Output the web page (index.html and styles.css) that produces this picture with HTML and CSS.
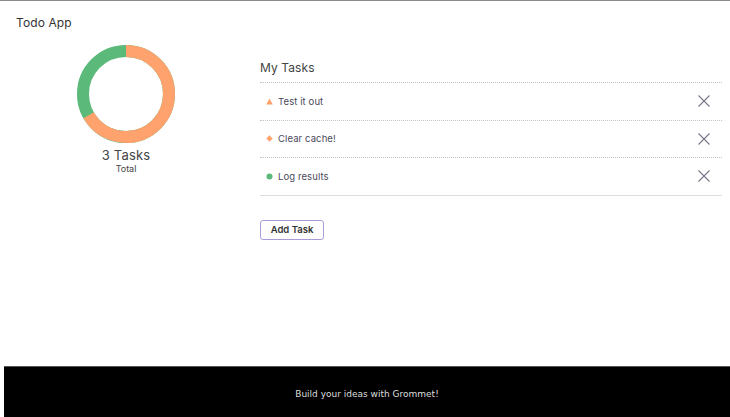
FILE: index.html
```html
<!DOCTYPE html>
<html>
<head>
<meta charset="utf-8">
<link rel="stylesheet" href="styles.css">
</head>
<body>
<div class="page">
  <main class="main">
    <h1 class="title">Todo App</h1>
    <div class="content">
      <section class="summary">
        <svg class="donut" width="98" height="98" viewBox="0 0 98 98">
          <circle cx="49" cy="49" r="43" fill="none" stroke="#5bb97a" stroke-width="12"/>
          <circle cx="49" cy="49" r="43" fill="none" stroke="#ffa26e" stroke-width="12"
            stroke-dasharray="180.1 90.1" transform="rotate(-90 49 49)"/>
        </svg>
        <div class="count">3 Tasks</div>
        <div class="count-label">Total</div>
      </section>
      <section class="tasks">
        <h2 class="tasks-title">My Tasks</h2>
        <ul class="list">
          <li class="item">
            <span class="marker"><svg width="7" height="7" viewBox="0 0 7 7"><polygon points="3.5,0.5 6.8,6.5 0.2,6.5" fill="#ffa26e"/></svg></span>
            <span class="label">Test it out</span>
            <svg class="close" width="12" height="12" viewBox="0 0 12 12"><path d="M0.5 0.5 L11.5 11.5 M11.5 0.5 L0.5 11.5" stroke="#77778a" stroke-width="1.1" fill="none"/></svg>
          </li>
          <li class="item">
            <span class="marker"><svg width="7" height="7" viewBox="0 0 7 7"><polygon points="3.5,0.3 6.7,3.5 3.5,6.7 0.3,3.5" fill="#ffa26e"/></svg></span>
            <span class="label">Clear cache!</span>
            <svg class="close" width="12" height="12" viewBox="0 0 12 12"><path d="M0.5 0.5 L11.5 11.5 M11.5 0.5 L0.5 11.5" stroke="#77778a" stroke-width="1.1" fill="none"/></svg>
          </li>
          <li class="item last">
            <span class="marker"><svg width="7" height="7" viewBox="0 0 7 7"><circle cx="3.5" cy="3.5" r="3" fill="#5bb97a"/></svg></span>
            <span class="label">Log results</span>
            <svg class="close" width="12" height="12" viewBox="0 0 12 12"><path d="M0.5 0.5 L11.5 11.5 M11.5 0.5 L0.5 11.5" stroke="#77778a" stroke-width="1.1" fill="none"/></svg>
          </li>
        </ul>
        <button class="add">Add Task</button>
      </section>
    </div>
  </main>
  <footer class="footer">Build your ideas with Grommet!</footer>
</div>
</body>
</html>
```

FILE: styles.css
```css
* { box-sizing: border-box; }
html, body { margin: 0; padding: 0; }
body {
  font-family: "Inter", "Open Sans", sans-serif;
  color: #444;
  background: #fff;
  border-top: 1px solid #8a8a8a;
  width: 730px;
  height: 417px;
  overflow: hidden;
}
.page {
  display: flex;
  flex-direction: column;
  height: 416px;
}
.main {
  flex: 1;
  padding: 14px 8px 0 16px;
}
.title {
  margin: 0;
  font-size: 12px;
  font-weight: 400;
  line-height: 16px;
  color: #333;
  letter-spacing: 0.1px;
}
.content {
  display: flex;
  gap: 24px;
  margin-top: 12px;
}
.summary {
  width: 220px;
  display: flex;
  flex-direction: column;
  align-items: center;
  padding-top: 2px;
}
.donut { display: block; }
.count {
  margin-top: 4px;
  font-size: 13px;
  line-height: 16px;
  color: #444;
  letter-spacing: 0.2px;
}
.count-label {
  font-size: 9px;
  line-height: 12px;
  color: #444;
}
.tasks {
  flex: 1;
  padding-top: 17px;
}
.tasks-title {
  margin: 0;
  font-size: 12px;
  font-weight: 400;
  line-height: 16px;
  color: #444;
  padding-bottom: 6px;
  border-bottom: 1px dotted #c4c4c4;
  letter-spacing: 0.1px;
}
.list {
  list-style: none;
  margin: 0;
  padding: 0;
}
.item {
  display: flex;
  align-items: center;
  height: 37.5px;
  padding: 0 12px 0 6px;
  border-bottom: 1px dotted #c4c4c4;
}
.item.last { border-bottom: 1px solid #ddd; }
.marker {
  width: 12px;
  display: flex;
  align-items: center;
}
.marker svg { display: block; }
.label {
  flex: 1;
  font-size: 9.5px;
  color: #4a4a5c;
  letter-spacing: 0.1px;
}
.close { display: block; }
.add {
  margin-top: 24px;
  font-family: inherit;
  font-size: 9.5px;
  font-weight: 600;
  color: #333;
  background: #fff;
  border: 1px solid #a99bd6;
  border-radius: 3px;
  height: 20px;
  width: 64px;
  padding: 0;
}
.footer {
  margin-left: 4px;
  height: 51px;
  background: #000;
  border-top: 1px solid #555;
  color: #ddd;
  font-family: "DejaVu Sans", sans-serif;
  font-size: 9px;
  display: flex;
  align-items: center;
  justify-content: center;
  padding-top: 4px;
}
```
